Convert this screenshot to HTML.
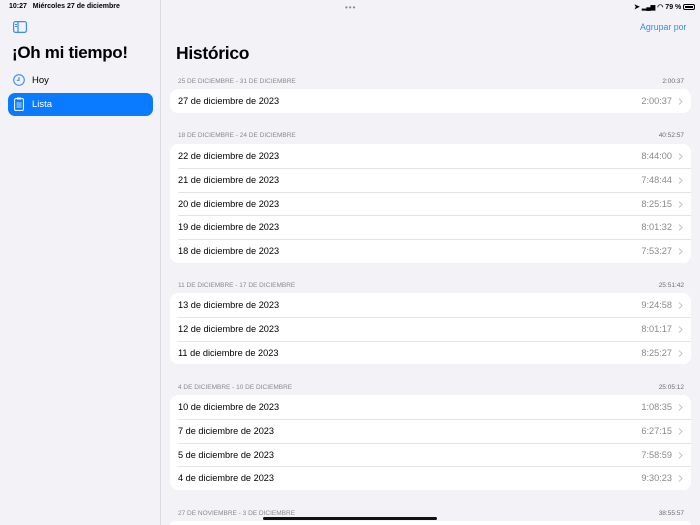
<!DOCTYPE html>
<html><head><meta charset="utf-8"><style>
*{margin:0;padding:0;box-sizing:border-box}
html,body{width:700px;height:525px;overflow:hidden}
body{background:#f2f2f7;font-family:"Liberation Sans",sans-serif;position:relative;color:#000}
.abs{position:absolute}
.side{left:0;top:0;width:161px;height:525px;border-right:1px solid #dcdce0;background:#f2f2f7}
.status{font-size:7px;font-weight:bold;top:3px}
.h{font-weight:bold;letter-spacing:-0.3px}
.hdr{left:178px;font-size:6.5px;color:#8a8a8e;width:506px}
.hdr span{float:right;color:#6e6e72}
.card{left:170px;width:521px;background:#fff;border-radius:8px;overflow:hidden}
.row{height:23.8px;position:relative;font-size:9.2px;line-height:25px;padding-left:8px}
.row+.row:before{content:"";position:absolute;left:8px;right:0;top:0;border-top:1px solid #e3e3e6}
.row .t{position:absolute;right:19px;top:0;color:#8a8a8e}
.row .c{position:absolute;right:8px;top:9px}
</style></head><body>
<div class="abs side"></div>
<div class="abs status" style="left:9px">10:27 &nbsp;&nbsp;Miércoles 27 de diciembre</div>
<div class="abs" style="left:345px;top:3px;font-size:8px;color:#888;letter-spacing:1px">•••</div>
<div class="abs status" style="left:634px">➤ <span style="font-size:6px">▂▄▆</span> ◠ 79 % <span style="display:inline-block;width:12px;height:6px;border:1px solid #000;border-radius:2px;vertical-align:-1px;padding:1px"><span style="display:block;width:8px;height:100%;background:#000"></span></span></div>
<svg class="abs" style="left:13px;top:21px" width="14" height="12" viewBox="0 0 14 12"><rect x="0.6" y="0.6" width="12.8" height="10.8" rx="2" fill="none" stroke="#3b8cf0" stroke-width="1.2"/><line x1="5" y1="1" x2="5" y2="11" stroke="#3b8cf0" stroke-width="1.2"/><line x1="2" y1="3.5" x2="4" y2="3.5" stroke="#3b8cf0"/><line x1="2" y1="5.5" x2="4" y2="5.5" stroke="#3b8cf0"/></svg>
<div class="abs h" style="left:12px;top:43px;font-size:17px">¡Oh mi tiempo!</div>
<svg class="abs" style="left:13px;top:74px" width="12" height="12" viewBox="0 0 12 12"><circle cx="6" cy="6" r="5.3" fill="none" stroke="#3b8cf0" stroke-width="1.1"/><path d="M6 3V6.3H3.8" fill="none" stroke="#3b8cf0" stroke-width="1.1"/></svg>
<div class="abs" style="left:32px;top:75px;font-size:9.5px">Hoy</div>
<div class="abs" style="left:8px;top:93px;width:145px;height:23px;background:#0a7aff;border-radius:7px"></div>
<svg class="abs" style="left:14px;top:97px" width="10" height="14" viewBox="0 0 10 14"><rect x="0.6" y="1.6" width="8.8" height="11.8" rx="1.2" fill="none" stroke="#fff" stroke-width="1"/><rect x="3" y="0.5" width="4" height="2" fill="#fff"/><line x1="2.5" y1="6" x2="7.5" y2="6" stroke="#fff" stroke-width=".8"/><line x1="2.5" y1="8" x2="7.5" y2="8" stroke="#fff" stroke-width=".8"/><line x1="2.5" y1="10" x2="7.5" y2="10" stroke="#fff" stroke-width=".8"/></svg>
<div class="abs" style="left:32px;top:99px;font-size:9.5px;color:#fff">Lista</div>
<div class="abs" style="left:640px;top:22px;font-size:8.8px;color:#3b8cf0">Agrupar por</div>
<div class="abs h" style="left:176px;top:43px;font-size:17.5px">Histórico</div>

<div class="abs hdr" style="top:78px">25 DE DICIEMBRE - 31 DE DICIEMBRE<span>2:00:37</span></div>
<div class="abs card" style="top:89px"><div class="row">27 de diciembre de 2023<span class="t">2:00:37</span><svg class="c" width="5" height="7" viewBox="0 0 5 7"><path d="M1 .5L4 3.5 1 6.5" fill="none" stroke="#c4c4c7" stroke-width="1"/></svg></div></div>

<div class="abs hdr" style="top:132px">18 DE DICIEMBRE - 24 DE DICIEMBRE<span>40:52:57</span></div>
<div class="abs card" style="top:144px">
<div class="row">22 de diciembre de 2023<span class="t">8:44:00</span><svg class="c" width="5" height="7" viewBox="0 0 5 7"><path d="M1 .5L4 3.5 1 6.5" fill="none" stroke="#c4c4c7" stroke-width="1"/></svg></div>
<div class="row">21 de diciembre de 2023<span class="t">7:48:44</span><svg class="c" width="5" height="7" viewBox="0 0 5 7"><path d="M1 .5L4 3.5 1 6.5" fill="none" stroke="#c4c4c7" stroke-width="1"/></svg></div>
<div class="row">20 de diciembre de 2023<span class="t">8:25:15</span><svg class="c" width="5" height="7" viewBox="0 0 5 7"><path d="M1 .5L4 3.5 1 6.5" fill="none" stroke="#c4c4c7" stroke-width="1"/></svg></div>
<div class="row">19 de diciembre de 2023<span class="t">8:01:32</span><svg class="c" width="5" height="7" viewBox="0 0 5 7"><path d="M1 .5L4 3.5 1 6.5" fill="none" stroke="#c4c4c7" stroke-width="1"/></svg></div>
<div class="row">18 de diciembre de 2023<span class="t">7:53:27</span><svg class="c" width="5" height="7" viewBox="0 0 5 7"><path d="M1 .5L4 3.5 1 6.5" fill="none" stroke="#c4c4c7" stroke-width="1"/></svg></div>
</div>

<div class="abs hdr" style="top:282px">11 DE DICIEMBRE - 17 DE DICIEMBRE<span>25:51:42</span></div>
<div class="abs card" style="top:293px">
<div class="row">13 de diciembre de 2023<span class="t">9:24:58</span><svg class="c" width="5" height="7" viewBox="0 0 5 7"><path d="M1 .5L4 3.5 1 6.5" fill="none" stroke="#c4c4c7" stroke-width="1"/></svg></div>
<div class="row">12 de diciembre de 2023<span class="t">8:01:17</span><svg class="c" width="5" height="7" viewBox="0 0 5 7"><path d="M1 .5L4 3.5 1 6.5" fill="none" stroke="#c4c4c7" stroke-width="1"/></svg></div>
<div class="row">11 de diciembre de 2023<span class="t">8:25:27</span><svg class="c" width="5" height="7" viewBox="0 0 5 7"><path d="M1 .5L4 3.5 1 6.5" fill="none" stroke="#c4c4c7" stroke-width="1"/></svg></div>
</div>

<div class="abs hdr" style="top:384px">4 DE DICIEMBRE - 10 DE DICIEMBRE<span>25:05:12</span></div>
<div class="abs card" style="top:395px">
<div class="row">10 de diciembre de 2023<span class="t">1:08:35</span><svg class="c" width="5" height="7" viewBox="0 0 5 7"><path d="M1 .5L4 3.5 1 6.5" fill="none" stroke="#c4c4c7" stroke-width="1"/></svg></div>
<div class="row">7 de diciembre de 2023<span class="t">6:27:15</span><svg class="c" width="5" height="7" viewBox="0 0 5 7"><path d="M1 .5L4 3.5 1 6.5" fill="none" stroke="#c4c4c7" stroke-width="1"/></svg></div>
<div class="row">5 de diciembre de 2023<span class="t">7:58:59</span><svg class="c" width="5" height="7" viewBox="0 0 5 7"><path d="M1 .5L4 3.5 1 6.5" fill="none" stroke="#c4c4c7" stroke-width="1"/></svg></div>
<div class="row">4 de diciembre de 2023<span class="t">9:30:23</span><svg class="c" width="5" height="7" viewBox="0 0 5 7"><path d="M1 .5L4 3.5 1 6.5" fill="none" stroke="#c4c4c7" stroke-width="1"/></svg></div>
</div>

<div class="abs hdr" style="top:510px">27 DE NOVIEMBRE - 3 DE DICIEMBRE<span>38:55:57</span></div>
<div class="abs card" style="top:521px;height:4px;border-radius:8px 8px 0 0"></div>
<div class="abs" style="left:263px;top:517px;width:174px;height:3px;background:#111;border-radius:2px"></div>
</body></html>
